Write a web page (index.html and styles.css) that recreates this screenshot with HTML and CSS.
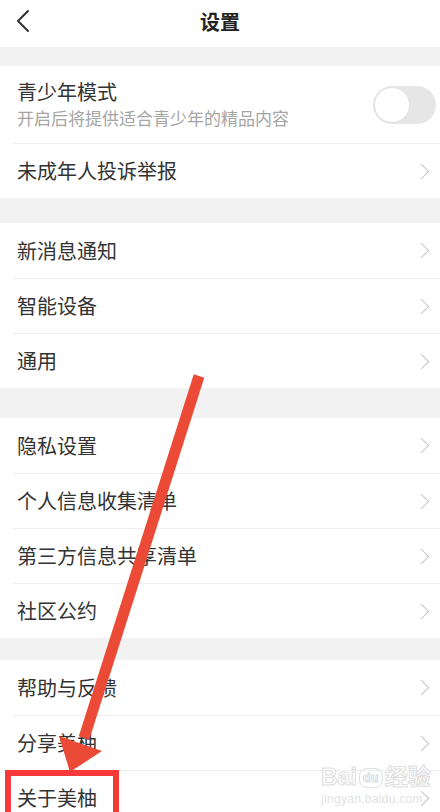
FILE: index.html
```html
<!DOCTYPE html>
<html lang="zh-CN">
<head>
  <meta charset="UTF-8" />
  <meta name="viewport" content="width=device-width, initial-scale=1.0" />
  <title>设置</title>
  <link rel="stylesheet" href="styles.css">
</head>
<body>
  <div class="page">
    <div class="topbar">
      <svg class="back" width="16" height="24" viewBox="0 0 16 24">
        <path d="M13 2 L3 12 L13 22" fill="none" stroke="#333" stroke-width="2" stroke-linecap="round" stroke-linejoin="round" />
      </svg>
      <h1>设置</h1>
    </div>

    <div class="group g1">
      <div class="row row-tall">
        <div class="row-text">
          <div class="label">青少年模式</div>
          <div class="sub">开启后将提供适合青少年的精品内容</div>
        </div>
        <div class="switch"><span class="knob"></span></div>
      </div>
      <div class="row">
        <span class="label">未成年人投诉举报</span>
        <i class="chev"></i>
      </div>
    </div>

    <div class="group g2">
      <div class="row"><span class="label">新消息通知</span><i class="chev"></i></div>
      <div class="row"><span class="label">智能设备</span><i class="chev"></i></div>
      <div class="row"><span class="label">通用</span><i class="chev"></i></div>
    </div>

    <div class="group g3">
      <div class="row"><span class="label">隐私设置</span><i class="chev"></i></div>
      <div class="row"><span class="label">个人信息收集清单</span><i class="chev"></i></div>
      <div class="row"><span class="label">第三方信息共享清单</span><i class="chev"></i></div>
      <div class="row"><span class="label">社区公约</span><i class="chev"></i></div>
    </div>

    <div class="group g4">
      <div class="row"><span class="label">帮助与反馈</span><i class="chev"></i></div>
      <div class="row"><span class="label">分享美柚</span><i class="chev"></i></div>
      <div class="row"><span class="label">关于美柚</span><i class="chev"></i></div>
    </div>

    <!-- watermark -->
    <div class="watermark">
      <div class="wm-logo">Bai<span class="wm-du">du</span>经验</div>
      <div class="wm-url">jingyan.baidu.com</div>
    </div>

    <!-- annotation: arrow + box -->
    <svg class="annot" width="440" height="812" viewBox="0 0 440 812">
      <line x1="199" y1="376" x2="84" y2="738" stroke="#ea4a36" stroke-width="11" />
      <polygon points="70,772 59,736 102,751" fill="#ea4a36" />
      <rect x="8" y="773" width="108" height="50" fill="none" stroke="#f63a3a" stroke-width="6" />
    </svg>
  </div>
</body>
</html>
```

FILE: styles.css
```css
* {
  box-sizing: border-box;
}

body {
  margin: 0;
  background: #f2f2f2;
  font-family: "Noto Sans CJK SC", "Noto Sans", sans-serif;
  color: #333;
  overflow: hidden;
}

.page {
  position: relative;
  width: 440px;
  height: 812px;
  overflow: hidden;
}

.topbar {
  height: 47px;
  background: #fff;
  display: flex;
  align-items: center;
  justify-content: center;
  position: relative;
}

.topbar h1 {
  margin: 0 0 4px;
  font-size: 20px;
  font-weight: 700;
  color: #222;
}

.back {
  position: absolute;
  left: 15px;
  top: 9px;
}

.group {
  background: #fff;
}

.g1 { margin-top: 19px; }
.g2 { margin-top: 25px; }
.g3 { margin-top: 30px; }
.g4 { margin-top: 22px; }

.row {
  height: 55px;
  margin-left: 13px;
  padding: 0 10px 0 4px;
  display: flex;
  align-items: center;
  justify-content: space-between;
}

.row + .row {
  border-top: 1px solid #eeeeee;
}

.row-tall {
  height: 77px;
  padding-right: 4px;
}

.label {
  font-size: 20px;
  line-height: 1;
  color: #333;
}

.row-text .label {
  margin-top: -2px;
}

.sub {
  margin-top: 7px;
  font-size: 17px;
  line-height: 1;
  color: #a5a5a5;
}

.chev {
  width: 11px;
  height: 11px;
  border-top: 1.6px solid #c4c4c4;
  border-right: 1.6px solid #c4c4c4;
  transform: rotate(45deg);
  margin-right: 3px;
}

.switch {
  width: 63px;
  height: 38px;
  border-radius: 19px;
  background: #e6e6e6;
  padding: 1px;
}

.knob {
  display: block;
  width: 36px;
  height: 36px;
  border-radius: 50%;
  background: #fff;
  border: 1px solid #e2e2e2;
}

.watermark {
  position: absolute;
  left: 321px;
  top: 764px;
  opacity: 0.9;
}

.wm-logo {
  font-family: "Liberation Sans", "Noto Sans CJK SC", sans-serif;
  font-size: 23px;
  font-weight: 700;
  line-height: 26px;
  color: #fdfdfd;
  -webkit-text-stroke: 1px #dcdcdc;
}

.wm-du {
  display: inline-block;
  font-size: 13px;
  line-height: 16px;
  padding: 1px 3px;
  margin: 0 2px;
  border: 1px solid #dcdcdc;
  border-radius: 8px;
  vertical-align: 3px;
}

.wm-url {
  font-family: "Liberation Sans", sans-serif;
  font-size: 12px;
  letter-spacing: 0.3px;
  color: #e0e0e0;
  margin-top: 2px;
}

.annot {
  position: absolute;
  left: 0;
  top: 0;
  pointer-events: none;
}
```
